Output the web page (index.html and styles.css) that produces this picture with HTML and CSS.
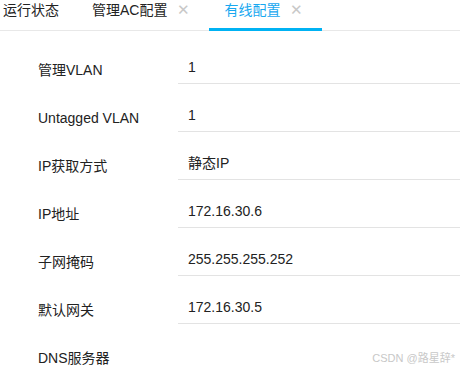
FILE: index.html
```html
<!DOCTYPE html>
<html>
<head>
    <title>有线配置</title>
    <meta charset="UTF-8">
    <meta name="viewport" content="width=device-width, initial-scale=1.0">
    <link rel="stylesheet" href="styles.css">
</head>
<body>
    <div class="tabs">
        <div class="tab first">运行状态</div>
        <div class="tab">管理AC配置<span class="close">&#x2715;</span></div>
        <div class="tab active">有线配置<span class="close">&#x2715;</span></div>
    </div>

    <div class="form">
        <div class="row">
            <div class="label">管理VLAN</div>
            <div class="value">1</div>
        </div>
        <div class="row">
            <div class="label">Untagged VLAN</div>
            <div class="value">1</div>
        </div>
        <div class="row">
            <div class="label">IP获取方式</div>
            <div class="value">静态IP</div>
        </div>
        <div class="row">
            <div class="label">IP地址</div>
            <div class="value">172.16.30.6</div>
        </div>
        <div class="row">
            <div class="label">子网掩码</div>
            <div class="value">255.255.255.252</div>
        </div>
        <div class="row">
            <div class="label">默认网关</div>
            <div class="value">172.16.30.5</div>
        </div>
        <div class="row">
            <div class="label">DNS服务器</div>
            <div class="value"></div>
        </div>
    </div>

    <div class="watermark">CSDN @路星辞*</div>
</body>
</html>
```

FILE: styles.css
```css
body {
    margin: 0;
    font-family: "Liberation Sans", Arial, "Noto Sans CJK SC", sans-serif;
    font-size: 14px;
    color: #222;
    background: #fff;
    height: 371px;
    overflow: hidden;
    position: relative;
}
.tabs {
    display: flex;
    height: 30px;
    border-bottom: 1px solid #e8e8e8;
}
.tab {
    height: 31px;
    box-sizing: border-box;
    padding: 0 19px 0 15px;
    line-height: 20px;
    border-bottom: 3px solid transparent;
    white-space: nowrap;
}
.tab.first {
    padding: 0 18px 0 3px;
}
.tab.active {
    color: #18a8f0;
    border-bottom-color: #00b2f3;
}
.close {
    color: #c8c8c8;
    font-size: 15px;
    margin-left: 10px;
}
.form {
    padding-top: 5px;
}
.row {
    display: flex;
    height: 48px;
}
.label {
    width: 140px;
    padding-left: 38px;
    padding-top: 24px;
    line-height: 20px;
    box-sizing: content-box;
}
.value {
    flex: 1;
    height: 48px;
    box-sizing: border-box;
    padding: 21px 0 0 10px;
    line-height: 20px;
    border-bottom: 1px solid #e3e3e3;
}
.watermark {
    position: absolute;
    right: 5px;
    bottom: 6px;
    font-size: 11px;
    color: #c8c8c8;
}
```
